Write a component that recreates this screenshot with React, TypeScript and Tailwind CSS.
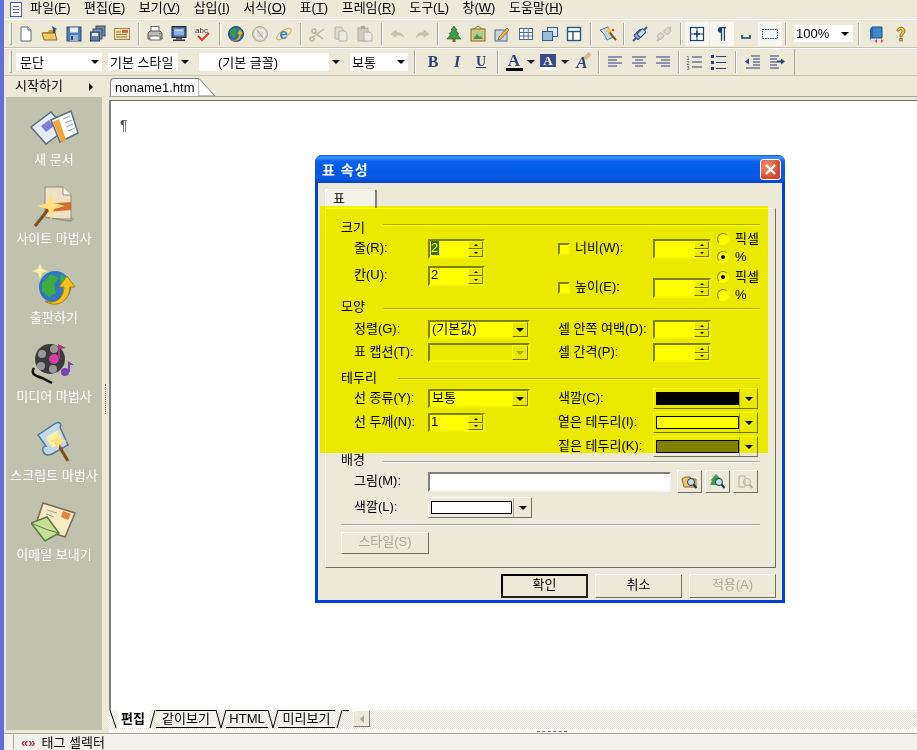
import type { ReactNode } from 'react'

// Small drawings used on the toolbars, all on an 18x18 box
const S = ({ children, size = 18 }: { children: ReactNode; size?: number }) => (
  <svg width={size} height={size} viewBox="0 0 18 18" className="block">{children}</svg>
)

const icons: Record<string, ReactNode> = {
  page: <S><path d="M4 2h7l3 3v11H4z" fill="#fff" stroke="#5d6b84" /><path d="M11 2v3h3" fill="#dfe6f0" stroke="#5d6b84" /></S>,
  open: <S><path d="M2 7h5l1-2h7v4H2z" fill="#c99a3d" /><path d="M1 8h13l2 7H3z" fill="#f4c767" stroke="#8c6a25" /><path d="M11 1l5 3-2 1v3h-2V5z" fill="#1f4f86" /></S>,
  save: <S><rect x="2" y="2" width="14" height="14" fill="#4d7fb8" stroke="#29496f" /><rect x="5" y="2.5" width="8" height="5" fill="#e9eef4" /><rect x="5" y="10" width="8" height="6" fill="#9fb6cf" /><rect x="6" y="11" width="2" height="4" fill="#29496f" /></S>,
  saveAll: <S><rect x="7" y="1" width="9" height="10" fill="#6f86a3" stroke="#3b4c63" /><rect x="4" y="4" width="9" height="10" fill="#7f96b3" stroke="#3b4c63" /><rect x="1.5" y="7" width="9" height="9" fill="#5f7fa6" stroke="#2f4057" /><rect x="3" y="8" width="6" height="3" fill="#e8edf3" /></S>,
  card: <S><rect x="1.5" y="3.5" width="15" height="11" fill="#f3dfa8" stroke="#9c8350" /><rect x="9" y="5" width="6" height="3" fill="#d8663a" /><path d="M3 7h5M3 9.5h11M3 12h11" stroke="#8c7a55" /></S>,
  print: <S><rect x="5" y="1.5" width="8" height="6" fill="#fff" stroke="#666" /><path d="M2 8l2-2h10l2 2v6H2z" fill="#b8b8b4" stroke="#555" /><rect x="4" y="11" width="10" height="4" fill="#fff" stroke="#666" /><rect x="13" y="8" width="2" height="1" fill="#3b9b3b" /></S>,
  monitor: <S><rect x="2" y="1.5" width="14" height="11" fill="#3a66a8" stroke="#222" /><rect x="4" y="3.5" width="10" height="7" fill="#8fb0dc" /><rect x="5" y="5" width="8" height="1" fill="#dbe6f5" /><rect x="6" y="12.5" width="6" height="2" fill="#555" /><rect x="3" y="14.5" width="12" height="1.5" fill="#333" /></S>,
  spell: <S><text x="1" y="7.5" fontSize="8" fontFamily="Liberation Sans" fill="#333">abc</text><path d="M4 11l4 4 7-7" fill="none" stroke="#d23a3a" strokeWidth="2" /></S>,
  globe: <S><circle cx="9" cy="9" r="7.5" fill="#2b6fb8" stroke="#1b3f73" /><path d="M3 6l4-3 3 2-2 3 1 4-3 1-2-3zM11 3l4 3-1 3-3-2z" fill="#3f9b3f" /><path d="M4 15c5 1 8-1 8-6H10l3-4 3 4h-2c0 6-4 8-10 6z" fill="#f3c02e" stroke="#a67c10" strokeWidth=".5" /></S>,
  ball: <S><circle cx="9" cy="9" r="7.5" fill="#d6d4c8" stroke="#aaa89c" /><circle cx="9" cy="9" r="4.5" fill="none" stroke="#f1f0e8" strokeWidth="2" /><path d="M6 5l6 8" stroke="#aaa89c" /></S>,
  ie: <S><ellipse cx="9" cy="9" rx="8.500" ry="3.500" fill="none" stroke="#e8b030" transform="rotate(-35 9 9)" /><text x="4.500" y="13.500" fontSize="15" fontWeight="bold" fontFamily="Liberation Sans" fill="#2a7ed6">e</text></S>,
  cut: <S><circle cx="4" cy="14" r="2" fill="none" stroke="#b5b3a6" strokeWidth="1.5" /><circle cx="6" cy="6" r="2" fill="none" stroke="#b5b3a6" strokeWidth="1.5" /><path d="M5 12L16 4M7 8l8 6" stroke="#b5b3a6" strokeWidth="1.5" /></S>,
  copy: <S><path d="M3 2h6l2 2v10H3z" fill="#dedcd0" stroke="#b5b3a6" /><path d="M7 6h6l2 2v8H7z" fill="#ecebdf" stroke="#b5b3a6" /></S>,
  paste: <S><rect x="2" y="3" width="10" height="13" fill="#cfcdc0" stroke="#b0aea0" /><rect x="5" y="1" width="4" height="3" fill="#aaa89c" /><path d="M8 7h6l2 2v7H8z" fill="#ecebdf" stroke="#b5b3a6" /></S>,
  undo: <S><path d="M2 9l5-4v2.500c4 0 7 1 8 5-2-2-4-2.500-8-2.500V12z" fill="#c6c4b7" stroke="#b5b3a6" strokeWidth=".5" /></S>,
  redo: <S><path d="M16 9l-5-4v2.500c-4 0-7 1-8 5 2-2 4-2.500 8-2.500V12z" fill="#c6c4b7" stroke="#b5b3a6" strokeWidth=".5" /></S>,
  tree: <S><path d="M9 1l3 4h-1.500l3.500 4h-2l4 5H2l4-5H4l3.500-4H6z" fill="#3f9b4a" stroke="#1f5f2a" strokeWidth=".6" /><rect x="7.500" y="14" width="3" height="3" fill="#8a5a2b" /></S>,
  image: <S><path d="M5 4l4-3 4 3" fill="none" stroke="#8c6a25" /><rect x="2" y="4" width="14" height="12" fill="#e8c777" stroke="#7a6233" /><rect x="4" y="6" width="10" height="8" fill="#a7d08e" /><path d="M4 14l4-5 3 3 1-1 2 3z" fill="#4f8f4a" /></S>,
  edit: <S><rect x="2" y="5" width="12" height="11" fill="#c7d5e6" stroke="#526a88" /><path d="M6 12l8-9 2 2-8 9-3 1z" fill="#f0b44a" stroke="#7a5a1f" strokeWidth=".7" /></S>,
  table: <S><rect x="2.500" y="3.500" width="13" height="11" fill="#fff" stroke="#4a6a96" /><path d="M2.500 7.500h13M2.500 11h13M6.800 3.500v11M11.200 3.500v11" stroke="#4a6a96" /></S>,
  layer: <S><rect x="6.500" y="2.500" width="10" height="9" fill="#dfe6f0" stroke="#2f5f8a" /><rect x="1.500" y="6.500" width="10" height="9" fill="#9dbbd8" stroke="#2f5f8a" /></S>,
  frame: <S><rect x="2.500" y="2.500" width="13" height="13" fill="#fff" stroke="#235a80" strokeWidth="1.400" /><path d="M2.500 6.500h13M8 6.500v9" stroke="#235a80" strokeWidth="1.400" /></S>,
  wizard: <S><path d="M1 5l8-3 2 4 3 6-6 3-3-6z" fill="#c7d8e8" stroke="#5a7a96" /><path d="M10 7l7 8" stroke="#7a5a2b" strokeWidth="2" /><path d="M10 1l1 4 4 1-4 1-1 4-1-4-4-1 4-1z" fill="#f6c53a" /><circle cx="14" cy="5" r="1.300" fill="#e2552f" /></S>,
  link: <S><path d="M2 16l5-5M11 7l5-5" stroke="#3f5f88" strokeWidth="2" /><rect x="5" y="5" width="6" height="9" rx="1" fill="#8aa5c8" stroke="#2f4a70" transform="rotate(45 8 9.500)" /><rect x="8" y="4" width="5" height="8" rx="1" fill="#c7d5e6" stroke="#2f4a70" transform="rotate(45 10.500 8)" /></S>,
  unlink: <S><path d="M2 16l3-3M13 5l3-3" stroke="#c6c4b7" strokeWidth="2" /><rect x="3" y="8" width="5" height="6" rx="1" fill="#dcdad0" stroke="#bdbbae" transform="rotate(45 5.500 11)" /><rect x="10" y="3" width="5" height="6" rx="1" fill="#dcdad0" stroke="#bdbbae" transform="rotate(45 12.500 6)" /></S>,
  cross: <S><rect x="2.500" y="2.500" width="13" height="13" fill="#fff" stroke="#16436e" strokeWidth="1.200" /><path d="M9 2.500v13M2.500 9h13" stroke="#16436e" /><path d="M9 6v6M6 9h6" stroke="#16436e" strokeWidth="1.500" /></S>,
  space: <S><path d="M5 10v3h8v-3" fill="none" stroke="#16436e" strokeWidth="1.600" /></S>,
  dash: <S><rect x="1.500" y="4.500" width="15" height="9" fill="#fff" stroke="#16436e" strokeDasharray="1.500 1" /></S>,
  help: <S><path d="M5 6c0-5 8-5 8 0 0 3-3 3-3 6H8c0-4 2-4 2-6s-3-2-3 0z" fill="#f3c63b" stroke="#6b5515" strokeWidth=".8" /><rect x="7.800" y="13.500" width="2.400" height="2.400" fill="#f3c63b" stroke="#6b5515" strokeWidth=".7" /></S>,
  book: <S><path d="M4 2h10v11H4z" fill="#3f86c8" stroke="#1b4f85" /><path d="M2 4l2-2v11l-2 2z" fill="#2b6299" /><path d="M2 15h10v1.500H2z" fill="#cfe0f0" /><path d="M9 14l-2.500 2L9 18zM13 14l2.500 2L13 18z" fill="#d9482b" /></S>,
  alignL: <S><path d="M2 4h14M2 7h9M2 10h14M2 13h9" stroke="#2f3f7a" /></S>,
  alignC: <S><path d="M2 4h14M5 7h8M2 10h14M5 13h8" stroke="#2f3f7a" /></S>,
  alignR: <S><path d="M2 4h14M7 7h9M2 10h14M7 13h9" stroke="#2f3f7a" /></S>,
  ol: <S><text x="0.500" y="7" fontSize="5.500" fontFamily="Liberation Sans" fill="#2f3f7a">1</text><text x="0.500" y="12" fontSize="5.500" fontFamily="Liberation Sans" fill="#2f3f7a">2</text><text x="0.500" y="17" fontSize="5.500" fontFamily="Liberation Sans" fill="#2f3f7a">3</text><path d="M6 4h10M6 9h10M6 14h10" stroke="#2f3f7a" /></S>,
  ul: <S><rect x="1" y="2" width="3" height="3" fill="#2f3f7a" /><rect x="1" y="8" width="3" height="3" fill="#2f3f7a" /><rect x="1" y="14" width="3" height="3" fill="#2f3f7a" /><path d="M6 3.500h10M6 9.500h10M6 15.500h10" stroke="#2f3f7a" /></S>,
  outdent: <S><path d="M7 3h9M9 6h7M9 9h7M9 12h7M2 15h14" stroke="#2f3f7a" /><path d="M1 8.500l4-3v6z" fill="#2f3f7a" /></S>,
  indent: <S><path d="M2 3h9M2 6h7M2 9h7M2 12h7M2 15h9" stroke="#2f3f7a" /><path d="M17 8.500l-4-3v6z" fill="#2f3f7a" /><rect x="9" y="7.500" width="4" height="2" fill="#2f3f7a" /></S>,
  browseFolder: <S><path d="M1 6l3-2h5l1 2h5v8H3z" fill="#f2c46a" stroke="#8c6a25" /><circle cx="10" cy="9" r="3.500" fill="#bfe0f5" stroke="#234" /><path d="M12.500 11.500l3 3.500" stroke="#234" strokeWidth="2" /></S>,
  browseTree: <S><path d="M7 1l6 6-1 1 2 4H1l2-4-1-1z" fill="#3f9b4a" /><circle cx="10" cy="9" r="3.500" fill="#bfe0f5" stroke="#234" /><path d="M12.500 11.500l3 3.500" stroke="#234" strokeWidth="2" /></S>,
  browseOff: <S><path d="M2 3h6v11H2z" fill="none" stroke="#b5b3a6" /><circle cx="10" cy="9" r="3.500" fill="none" stroke="#b5b3a6" /><path d="M12.500 11.500l3 3.500" stroke="#b5b3a6" strokeWidth="2" /></S>,
}

const Tri = ({ off }: { off?: boolean }) => (
  <span className={`block w-0 h-0 border-l-[4px] border-r-[4px] border-t-[4px] border-l-transparent border-r-transparent ${off ? 'border-t-[#aca899]' : 'border-t-black'}`} />
)

const Btn = ({ name, on, cls }: { name: string; on?: boolean; cls?: string }) => (
  <div className={`w-6 h-[24px] flex items-center justify-center shrink-0 ${on ? 'bg-[#f8f7f1]' : ''} ${cls ?? ''}`}>{icons[name]}</div>
)

const Sep = ({ w }: { w: string }) => (
  <div className={`${w} h-[22px] shrink-0 flex justify-center`}><div className="w-[2px] h-full border-l border-r border-l-[#aca899] border-r-white" /></div>
)

const Grip = () => <div className="w-[3px] h-[22px] ml-[5px] mr-[2px] shrink-0 border-l border-b border-r border-l-white border-r-[#aca899] border-b-[#aca899]" />

const ToolSelect = ({ text, w, pl, arrowBg }: { text: string; w: string; pl: string; arrowBg?: boolean }) => (
  <div className={`${w} h-[18px] shrink-0 bg-white flex items-center`}>
    <span className={`flex-1 ${pl} leading-none whitespace-nowrap`}>{text}</span>
    <span className={`w-[14px] h-full flex items-center justify-center ${arrowBg ? 'bg-[#ece9d8]' : ''}`}><Tri /></span>
  </div>
)

const menus: [string, string][] = [
  ['파일', 'F'], ['편집', 'E'], ['보기', 'V'], ['삽입', 'I'], ['서식', 'O'],
  ['표', 'T'], ['프레임', 'R'], ['도구', 'L'], ['창', 'W'], ['도움말', 'H'],
]

function Toolbars() {
  return (
    <>
      {/* Menu */}
      <div className="h-[19px] flex items-center shrink-0">
        <div className="ml-[6px] mr-[8px] w-[12px] h-[15px] bg-white border border-[#3a5fcd] flex flex-col gap-[2px] justify-center px-[2px]">
          <div className="h-px bg-[#8050b0]" /><div className="h-px bg-[#8050b0]" /><div className="h-px bg-[#8050b0]" />
        </div>
        <div className="flex gap-[13.5px] pb-[4px]">
          {menus.map(([t, k]) => <span key={k} className="whitespace-nowrap leading-none">{t}(<u>{k}</u>)</span>)}
        </div>
      </div>
      {/* Standard toolbar */}
      <div className="h-[29px] shrink-0 flex items-center border-t border-t-white border-b border-b-[#c5c2b0]">
        <Grip />
        <Btn name="page" /><Btn name="open" /><Btn name="save" /><Btn name="saveAll" /><Btn name="card" />
        <Sep w="w-[9px]" />
        <Btn name="print" /><Btn name="monitor" /><Btn name="spell" />
        <Sep w="w-[9px]" />
        <Btn name="globe" /><Btn name="ball" /><Btn name="ie" />
        <Sep w="w-[9px]" />
        <Btn name="cut" /><Btn name="copy" /><Btn name="paste" />
        <Sep w="w-[9px]" />
        <Btn name="undo" /><Btn name="redo" />
        <Sep w="w-[8px]" />
        <Btn name="tree" /><Btn name="image" /><Btn name="edit" /><Btn name="table" /><Btn name="layer" /><Btn name="frame" />
        <Sep w="w-[10px]" />
        <Btn name="wizard" />
        <Sep w="w-[8px]" />
        <Btn name="link" /><Btn name="unlink" />
        <Sep w="w-[9px]" />
        <Btn name="cross" on />
        <div className="w-6 h-[24px] ml-px shrink-0 bg-[#f8f7f1] flex items-center justify-center font-bold text-[17px] text-[#16436e]">¶</div>
        <Btn name="space" /><Btn name="dash" on />
        <Sep w="w-[8px]" />
        <div className="w-[59px] h-[17px] ml-1 shrink-0 bg-white flex items-center">
          <span className="flex-1 pl-[2px] pb-px text-[13px] leading-none">100%</span>
          <span className="w-[16px] flex justify-center"><Tri /></span>
        </div>
        <Sep w="w-[12px]" />
        <Btn name="book" /><Btn name="help" />
      </div>
      {/* Format toolbar */}
      <div className="h-[28px] shrink-0 flex items-center border-t border-t-white border-b border-b-[#c5c2b0]">
        <Grip />
        <div className="ml-[2px]"><ToolSelect text="문단" w="w-[86px]" pl="pl-[4px]" /></div>
        <div className="ml-[6px]"><ToolSelect text="기본 스타일" w="w-[84px]" pl="pl-[2px]" arrowBg /></div>
        <div className="ml-[7px]"><ToolSelect text="(기본 글꼴)" w="w-[144px]" pl="pl-[19px]" arrowBg /></div>
        <div className="ml-[7px]"><ToolSelect text="보통" w="w-[58px]" pl="pl-[2px]" /></div>
        <Sep w="w-[13px]" />
        <div className="w-6 shrink-0 text-center font-['Liberation_Serif',serif] font-bold text-[16px] leading-none text-[#2f3f7a]">B</div>
        <div className="w-6 shrink-0 text-center font-['Liberation_Serif',serif] font-bold italic text-[16px] leading-none text-[#2f3f7a]">I</div>
        <div className="w-6 shrink-0 text-center font-['Liberation_Serif',serif] font-bold underline text-[14px] leading-none text-[#2f3f7a]">U</div>
        <Sep w="w-[9px]" />
        <div className="w-6 shrink-0 flex flex-col items-center font-['Liberation_Serif',serif] font-bold text-[17px] leading-[15px] text-[#2f3f7a]">A<div className="w-[17px] h-[3px] bg-black" /></div>
        <div className="w-[10px] shrink-0 flex justify-center"><Tri /></div>
        <div className="w-6 shrink-0 flex flex-col items-center">
          <div className="w-[16px] h-[13px] bg-[#3a4a8a] text-white font-['Liberation_Serif',serif] font-bold text-[13px] leading-[13px] text-center">A</div>
          <div className="w-[16px] h-[3px] bg-white" />
        </div>
        <div className="w-[10px] shrink-0 flex justify-center"><Tri /></div>
        <div className="w-6 shrink-0 relative text-center font-['Liberation_Serif',serif] font-bold italic text-[17px] leading-none text-[#2f3f7a]">A<span className="absolute right-[3px] top-0 w-[7px] h-[4px] bg-[#d8b98a] rotate-[-45deg]" /></div>
        <Sep w="w-[9px]" />
        <Btn name="alignL" /><Btn name="alignC" /><Btn name="alignR" />
        <Sep w="w-[8px]" />
        <Btn name="ol" /><Btn name="ul" />
        <Sep w="w-[10px]" />
        <Btn name="outdent" /><Btn name="indent" />
        <div className="w-[6px] h-full shrink-0 border-r border-r-[#aca899]" />
      </div>
    </>
  )
}

const Side = ({ label, children }: { label: string; children: ReactNode }) => (
  <div className="h-[79px] shrink-0 flex flex-col items-center">
    <div className="h-[50px] w-[56px] flex items-center justify-center">{children}</div>
    <span className="text-white whitespace-nowrap leading-none mt-px">{label}</span>
  </div>
)

function Sidebar() {
  return (
    <div className="w-[105px] shrink-0 flex flex-col">
      <div className="h-[21px] shrink-0 flex items-center pl-[11px] pr-[16px] justify-between">
        <span className="leading-none pb-[3px]">시작하기</span>
        <span className="w-0 h-0 border-t-[4px] border-b-[4px] border-l-[4px] border-t-transparent border-b-transparent border-l-black" />
      </div>
      <div className="flex-1 flex min-h-0 pb-[3px]">
        <div className="w-[96px] ml-[2px] bg-[#c1c2ad] flex flex-col pt-[5px]">
          <Side label="새 문서">
            <svg width="50" height="40" viewBox="0 0 50 40">
              <path d="M2 20L22 5l15 17-20 15z" fill="#e6ecf6" stroke="#5b6b80" strokeWidth="1.500" />
              <path d="M12 19l8-6 5 6-8 6z" fill="#7d80d8" />
              <path d="M22 13l20-9 7 22-18 9z" fill="#fff" stroke="#5b6b80" strokeWidth="1.500" />
              <path d="M24 15l6-3 7 21-5 2z" fill="#f2a63a" />
              <path d="M34 12l7-3M36 16l7-3M37 20l7-3M39 24l7-3" stroke="#8fa2c0" />
            </svg>
          </Side>
          <Side label="사이트 마법사">
            <svg width="46" height="44" viewBox="0 0 46 44">
              <path d="M14 3h18l8 8v26l-26-4z" fill="#efe2c2" stroke="#8a8a80" />
              <path d="M32 3v8h8" fill="#fff" stroke="#8a8a80" />
              <path d="M14 20l26-2v8l-26 2z" fill="#d8692f" />
              <path d="M22 34l-10-0 28 4 4-4z" fill="#8d8d7c" opacity=".5" />
              <path d="M20 22L4 42" stroke="#7a4f22" strokeWidth="3" />
              <path d="M20 8l3 11 11 3-11 3-3 11-3-11-11-3 11-3z" fill="#ffe27a" />
            </svg>
          </Side>
          <Side label="출판하기">
            <svg width="46" height="44" viewBox="0 0 46 44">
              <path d="M9 0l2 6 6 2-6 2-2 6-2-6-6-2 6-2z" fill="#fff1a8" />
              <circle cx="24" cy="24" r="16" fill="#2d77c4" />
              <path d="M11 20l9-9 8 4-5 6 2 9-7 4-7-6zM30 11l8 7-3 6-6-5z" fill="#3fae3f" />
              <path d="M14 38c10 3 18-1 19-14h-5l8-11 8 11h-5c0 14-14 22-25 14z" fill="#f6c21e" stroke="#a87c08" />
            </svg>
          </Side>
          <Side label="미디어 마법사">
            <svg width="48" height="44" viewBox="0 0 48 44">
              <circle cx="20" cy="17" r="15" fill="#3b3b3b" />
              <circle cx="12" cy="12" r="4" fill="#999" /><circle cx="24" cy="7" r="4" fill="#999" /><circle cx="11" cy="24" r="4" fill="#999" /><circle cx="23" cy="27" r="4" fill="#999" />
              <path d="M4 26c-4 6 2 8 8 10l10 5" fill="none" stroke="#111" strokeWidth="2.500" />
              <circle cx="24" cy="17" r="5" fill="#d63fa0" />
              <path d="M28 17V2l8 4-6 1v10z" fill="#b03080" />
              <circle cx="35" cy="30" r="4" fill="#7a3fb0" />
              <path d="M38 30V19l6 4-4 0v7z" fill="#7a3fb0" />
            </svg>
          </Side>
          <Side label="스크립트 마법사">
            <svg width="40" height="44" viewBox="0 0 40 44">
              <path d="M4 14L22 2c4-2 6 2 4 4l8 18-16 9c-4 2-8 1-9-3-1-3 1-5 3-5L4 14z" fill="#c3d8e8" stroke="#4f7a96" strokeWidth="1.500" />
              <path d="M12 16l12-7 5 12-11 6z" fill="#f4f1a8" />
              <path d="M22 20l12 20" stroke="#7a4f22" strokeWidth="3" />
              <path d="M24 10l2 8 8 2-8 2-2 8-2-8-8-2 8-2z" fill="#ffe27a" />
            </svg>
          </Side>
          <Side label="이메일 보내기">
            <svg width="46" height="42" viewBox="0 0 46 42">
              <path d="M12 2l32 10-10 24-30-10z" fill="#f3ecc4" stroke="#7a6a50" strokeWidth="1.500" />
              <path d="M32 10l8 3-3 6-7-3z" fill="#e8823a" />
              <path d="M16 9l10 3M15 13l8 3" stroke="#a0a088" />
              <path d="M0 22l16-6 12 16-14 8z" fill="#c6e09a" stroke="#5f7a40" strokeWidth="1.500" />
              <path d="M0 22l17 7 11 3" fill="none" stroke="#5f7a40" />
            </svg>
          </Side>
        </div>
        <div className="flex-1 flex flex-col justify-center items-center pb-[30px]">
          <div className="h-[30px] w-px border-l border-dotted border-l-[#666]" />
        </div>
      </div>
    </div>
  )
}

const DocTabs = () => (
  <div className="h-[25px] shrink-0 flex flex-col">
    <div className="h-[20px] flex items-end pl-px">
      <div className="h-[18px] w-[88px] bg-white border-l border-t border-[#7f7f7f] rounded-tl-sm pl-[4px] text-[13px] flex items-center whitespace-nowrap leading-none">noname1.htm</div>
      <svg width="18" height="18" viewBox="0 0 18 18" className="block"><path d="M0 0.500h1L17 18H0z" fill="#fff" stroke="#7f7f7f" /></svg>
    </div>
    <div className="h-px bg-[#aca899]" />
    <div className="h-[3px] bg-[#ece9d8]" />
    <div className="h-px bg-[#716f64]" />
  </div>
)

const Slash = ({ d, w = 14 }: { d: string; w?: number }) => (
  <svg width={w} height="18" viewBox={`0 0 ${w} 18`} className="block shrink-0"><path d={d} fill="none" stroke="#000" /></svg>
)

const BottomTabs = () => (
  <div className="h-[19px] shrink-0 flex items-start bg-[repeating-conic-gradient(#e6e4d2_0%_25%,#ffffff_0%_50%)] bg-[length:2px_2px]">
    <Slash d="M1 0l6 18" w={8} />
    <div className="h-[18px] w-[32px] bg-white font-bold leading-[18px] text-center whitespace-nowrap">편집</div>
    <Slash d="M6 0L1 18" w={7} />
    <div className="h-[18px] w-[60px] bg-[#f3f2ea] border-t border-b border-black leading-[16px] text-center whitespace-nowrap">같이보기</div>
    <Slash d="M0 0l5 18M5 18L10 0" w={10} />
    <div className="h-[18px] w-[42px] bg-[#f3f2ea] border-t border-b border-black leading-[16px] text-center">HTML</div>
    <Slash d="M0 0l5 18M5 18L10 0" w={10} />
    <div className="h-[18px] w-[57px] bg-[#f3f2ea] border-t border-b border-black leading-[16px] text-center whitespace-nowrap">미리보기</div>
    <Slash d="M7 0L2 18" w={8} />
    <div className="w-[6px] h-[18px] border-t border-black" />
    <div className="ml-[4px] w-[17px] h-[17px] bg-[#ece9d8] border border-t-white border-l-white border-r-[#808080] border-b-[#808080] flex items-center justify-center">
      <span className="w-0 h-0 border-t-[4px] border-b-[4px] border-r-[4px] border-t-transparent border-b-transparent border-r-[#aca899]" />
    </div>
  </div>
)

// Dialog controls
const field = 'border-2 border-t-[#808080] border-l-[#808080] border-r-[#f6f5ee] border-b-[#f6f5ee]'
const raised = 'bg-[#ece9d8] border border-t-white border-l-white border-r-[#716f64] border-b-[#716f64]'

const Spin = ({ w, h, value, sel, cls }: { w: string; h: string; value?: string; sel?: boolean; cls?: string }) => (
  <div className={`${w} ${h} ${field} bg-white flex shrink-0 ${cls ?? ''}`}>
    <div className="flex-1 pl-px leading-[13px]">
      {sel ? <span className="block w-[8px] h-[14px] bg-[#316ac5] text-white">{value}</span> : value}
    </div>
    <div className="w-[15px] flex flex-col">
      <div className={`flex-1 ${raised} flex items-center justify-center`}><span className="w-0 h-0 border-l-[2px] border-r-[2px] border-b-[2px] border-l-transparent border-r-transparent border-b-black" /></div>
      <div className={`flex-1 ${raised} flex items-center justify-center`}><span className="w-0 h-0 border-l-[2px] border-r-[2px] border-t-[2px] border-l-transparent border-r-transparent border-t-black" /></div>
    </div>
  </div>
)

const Select = ({ value, off, h }: { value?: string; off?: boolean; h: string }) => (
  <div className={`w-[102px] ${h} ${field} ${off ? 'bg-[#ece9d8]' : 'bg-white'} flex shrink-0`}>
    <div className="flex-1 pl-[2px] leading-[14px] whitespace-nowrap">{value}</div>
    <div className={`w-[16px] ${raised} flex items-center justify-center`}><Tri off={off} /></div>
  </div>
)

const ColorBtn = ({ w, swatch, swatchW }: { w: string; swatch: string; swatchW: string }) => (
  <div className={`${w} h-[21px] flex shrink-0 ${raised}`}>
    <div className="flex-1 flex items-center pl-[2px]"><div className={`${swatchW} h-[13px] border border-black ${swatch}`} /></div>
    <div className="w-[18px] border-l border-l-[#aca899] flex items-center justify-center"><Tri /></div>
  </div>
)

const Radio = ({ on, label }: { on?: boolean; label: string }) => (
  <div className="h-[18px] flex items-center shrink-0">
    <span className="w-[12px] h-[12px] rounded-full bg-white border border-t-[#808080] border-l-[#808080] border-r-white border-b-white flex items-center justify-center">
      {on && <span className="w-[4px] h-[4px] rounded-full bg-black" />}
    </span>
    <span className="ml-[6px] pb-[2px] leading-none whitespace-nowrap">{label}</span>
  </div>
)

const Check = () => <span className={`w-[12px] h-[12px] bg-white shrink-0 ${field}`} />

const Heading = ({ title, w, line }: { title: string; w: string; line: string }) => (
  <div className="h-4 flex items-start shrink-0">
    <span className={`${w} leading-4 shrink-0`}>{title}</span>
    <div className={`flex-1 h-[2px] bg-[#aca899] border-b border-b-white ${line}`} />
  </div>
)

const Label = ({ t, w = 'w-[74px]', cls }: { t: string; w?: string; cls?: string }) => (
  <span className={`${w} pb-[3px] leading-none whitespace-nowrap shrink-0 ${cls ?? ''}`}>{t}</span>
)

const Row = ({ cls, children }: { cls: string; children: ReactNode }) => (
  <div className={`flex items-center ${cls}`}>{children}</div>
)

function TableDialog() {
  return (
    <div className="absolute left-[315px] top-[155px] w-[470px] h-[448px] flex flex-col rounded-t-[7px] overflow-hidden bg-[#0040d8]">
      <div className="h-[28px] shrink-0 flex items-center justify-between pl-[7px] pr-[4px] bg-[linear-gradient(180deg,#0a5fe8_0%,#3d95ff_8%,#0a62ee_22%,#0058e8_60%,#0a5ae6_80%,#0046c8_100%)]">
        <span className="text-white font-bold leading-none text-[14px] tracking-[1px] pt-[2px]">표 속성</span>
        <div className="w-[21px] h-[21px] rounded-[3px] border border-white bg-[radial-gradient(circle_at_30%_30%,#f0906a,#d5492a_70%)] flex items-center justify-center">
          <svg width="13" height="13" viewBox="0 0 13 13"><path d="M2 2l9 9M11 2l-9 9" stroke="#fff" strokeWidth="2.400" /></svg>
        </div>
      </div>
      <div className="h-[417px] mx-[3px] bg-[#ece9d8] flex flex-col shrink-0">
        <div className="ml-[7px] mt-[6px] w-[52px] h-[19px] shrink-0 pl-[7px] leading-[18px] bg-[#f3f2ea] border-t border-l border-r-2 border-t-white border-l-white border-r-[#808080] rounded-t-[2px]">표</div>
        <div className="ml-[7px] w-[451px] h-[360px] shrink-0 border border-t-white border-l-white border-r-[#716f64] border-b-[#716f64] pl-[15px] pr-[15px] pt-[11px] flex flex-col">
          {/* 크기 */}
          <Heading title="크기" w="w-[42px]" line="mt-[4px]" />
          <div className="h-[63px] shrink-0 flex">
            <div className="w-[217px] shrink-0 pl-[13px] pt-[3px] flex flex-col gap-[7px]">
              <Row cls="h-[20px]"><Label t="줄(R):" /><Spin w="w-[57px]" h="h-[20px]" value="2" sel /></Row>
              <Row cls="h-[20px]"><Label t="칸(U):" /><Spin w="w-[57px]" h="h-[20px]" value="2" /></Row>
            </div>
            <div className="flex-1 -mt-[6px] flex flex-col">
              <div className="flex h-[38px] shrink-0">
                <Row cls="w-[95px] shrink-0 h-[20px] mt-[9px]"><Check /><Label t="너비(W):" w="w-auto" cls="ml-[5px]" /></Row>
                <Spin w="w-[58px]" h="h-[20px]" cls="mt-[9px]" />
                <div className="ml-[6px]"><Radio label="픽셀" /><Radio on label="%" /></div>
              </div>
              <div className="flex h-[38px] shrink-0">
                <Row cls="w-[95px] shrink-0 h-[20px] mt-[10px]"><Check /><Label t="높이(E):" w="w-auto" cls="ml-[5px]" /></Row>
                <Spin w="w-[58px]" h="h-[20px]" cls="mt-[10px]" />
                <div className="ml-[6px]"><Radio on label="픽셀" /><Radio label="%" /></div>
              </div>
            </div>
          </div>
          {/* 모양 */}
          <Heading title="모양" w="w-[42px]" line="mt-[9px]" />
          <div className="h-[55px] shrink-0 flex">
            <div className="w-[217px] shrink-0 pl-[13px] pt-[5px] flex flex-col gap-[4px]">
              <Row cls="h-[19px]"><Label t="정렬(G):" /><Select value="(기본값)" h="h-[19px]" /></Row>
              <Row cls="h-[19px]"><Label t="표 캡션(T):" /><Select off h="h-[19px]" /></Row>
            </div>
            <div className="flex-1 pt-[5px] flex flex-col gap-[4px]">
              <Row cls="h-[19px]"><Label t="셀 안쪽 여백(D):" w="w-[95px]" /><Spin w="w-[58px]" h="h-[19px]" /></Row>
              <Row cls="h-[19px]"><Label t="셀 간격(P):" w="w-[95px]" /><Spin w="w-[58px]" h="h-[19px]" /></Row>
            </div>
          </div>
          {/* 테두리 */}
          <Heading title="테두리" w="w-[57px]" line="mt-[8px]" />
          <div className="h-[66px] shrink-0 flex">
            <div className="w-[217px] shrink-0 pl-[13px] pt-[3px] flex flex-col gap-[5px]">
              <Row cls="h-[19px]"><Label t="선 종류(Y):" /><Select value="보통" h="h-[19px]" /></Row>
              <Row cls="h-[19px]"><Label t="선 두께(N):" /><Spin w="w-[57px]" h="h-[19px]" value="1" /></Row>
            </div>
            <div className="flex-1 pt-[2px] flex flex-col gap-[3px]">
              <Row cls="h-[21px]"><Label t="색깔(C):" w="w-[95px]" /><ColorBtn w="w-[105px]" swatchW="w-[83px]" swatch="bg-black" /></Row>
              <Row cls="h-[21px]"><Label t="옅은 테두리(I):" w="w-[95px]" /><ColorBtn w="w-[105px]" swatchW="w-[83px]" swatch="bg-white" /></Row>
              <Row cls="h-[21px]"><Label t="짙은 테두리(K):" w="w-[95px]" /><ColorBtn w="w-[105px]" swatchW="w-[83px]" swatch="bg-[#808080]" /></Row>
            </div>
          </div>
          {/* 배경 */}
          <Heading title="배경" w="w-[42px]" line="mt-[9px]" />
          <div className="pl-[13px] pt-[2px] flex flex-col">
            <div className="flex items-center h-[23px]">
              <Label t="그림(M):" />
              <div className={`w-[243px] h-[20px] bg-white shrink-0 ${field}`} />
              <div className="ml-[6px] flex gap-[3px]">
                <div className={`w-[25px] h-[23px] ${raised} flex items-center justify-center`}>{icons.browseFolder}</div>
                <div className={`w-[25px] h-[23px] ${raised} flex items-center justify-center`}>{icons.browseTree}</div>
                <div className={`w-[25px] h-[23px] ${raised} flex items-center justify-center`}>{icons.browseOff}</div>
              </div>
            </div>
            <div className="flex items-center h-[21px] mt-[4px]">
              <Label t="색깔(L):" />
              <ColorBtn w="w-[104px]" swatchW="w-[81px]" swatch="bg-white" />
            </div>
          </div>
          <div className="mt-[6px] h-[2px] shrink-0 bg-[#aca899] border-b border-b-white" />
          <div className={`mt-[6px] w-[88px] h-[22px] shrink-0 ${raised} text-[#aca899] text-center leading-[18px]`}>스타일(S)</div>
        </div>
        <div className="mt-[6px] pr-[6px] flex justify-end gap-[7px]">
          <div className="w-[87px] h-[24px] bg-[#ece9d8] border-2 border-t-black border-l-black border-r-[#222] border-b-[#222] text-center leading-[18px]">확인</div>
          <div className={`w-[87px] h-[24px] ${raised} text-center leading-[19px]`}>취소</div>
          <div className={`w-[87px] h-[24px] ${raised} text-[#aca899] text-center leading-[19px]`}>적용(A)</div>
        </div>
      </div>
      {/* Yellow marker over the first three groups */}
      <div className="absolute left-[5px] top-[51px] w-[448px] h-[247px] bg-[#ffff00] mix-blend-multiply pointer-events-none" />
    </div>
  )
}

export default function App() {
  return (
    <div className="relative w-[917px] h-[750px] overflow-hidden flex bg-[#ece9d8] text-black text-[13px] font-['Liberation_Sans','Noto_Sans_CJK_KR',sans-serif]">
      <div className="w-[4px] shrink-0 bg-[#5f70d8]" />
      <div className="flex-1 min-w-0 flex flex-col">
        <Toolbars />
        <div className="flex-1 min-h-0 flex">
          <Sidebar />
          <div className="flex-1 min-w-0 flex flex-col">
            <DocTabs />
            <div className="flex-1 min-h-0 bg-white border-l-2 border-l-[#808080] pl-[9px] pt-[14px] text-[14px] text-[#555]">¶</div>
            <BottomTabs />
            <div className="h-[4px] shrink-0 bg-[#f8f7f1]" />
          </div>
        </div>
        {/* Status bar */}
        <div className="relative h-[17px] shrink-0 bg-[#f3f2ea] border-t border-t-[#a5a58d] flex items-center">
          <div className="absolute left-[533px] -top-[3px] w-[30px] border-t border-dashed border-t-[#666]" />
          <div className="ml-[9px] w-px h-[14px] bg-[#aca899]" />
          <span className="ml-[7px] text-[#b03050] font-bold leading-none">«»</span>
          <span className="ml-[6px] leading-none">태그 셀렉터</span>
        </div>
      </div>
      <TableDialog />
    </div>
  )
}
